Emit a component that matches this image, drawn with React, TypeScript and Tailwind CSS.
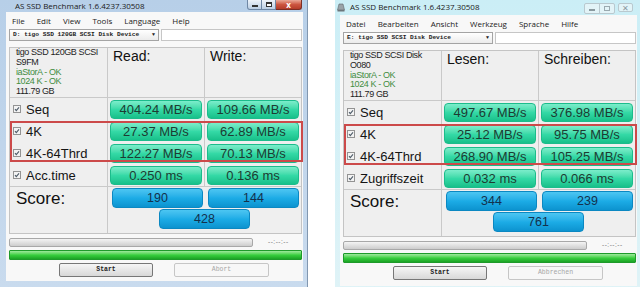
type Row = { label: string; read: string; write: string };

type WinProps = {
  active: boolean;
  menus: string[];
  drive: string;
  info: { text: string; green?: boolean }[];
  heads: [string, string];
  rows: Row[];
  scores: [string, string, string];
  start: string;
  abort: string;
};

const sans = "font-['Liberation_Sans',Arial,sans-serif]";
const ui = "font-['Open_Sans','Noto_Sans',sans-serif]";
const mono = "font-['Liberation_Mono','Courier_New',monospace]";

function Check() {
  return (
    <svg width="8" height="8" viewBox="0 0 8 8" className="shrink-0">
      <rect x="0.5" y="0.5" width="7" height="7" fill="#f3f3f3" stroke="#939393" />
      <path d="M2 4.1 L3.3 5.6 L6 2.3" fill="none" stroke="#4d5b68" strokeWidth="1.1" />
    </svg>
  );
}

function Bar({ v }: { v: string }) {
  return (
    <div className="ml-[2px] flex h-[19px] w-[92px] items-center justify-center rounded-[4px] border border-[#1cbc8b] bg-linear-to-b from-[#7bedcb] via-[#34d9a6] to-[#17c08a] text-[13px] leading-none text-[#1d3b32]">
      {v}
    </div>
  );
}

function Score({ v }: { v: string }) {
  return (
    <div className="flex h-[20px] w-[91px] items-center justify-center rounded-[4px] border border-[#0b88c2] bg-linear-to-b from-[#4cc6f2] via-[#1cace6] to-[#0c93cf] text-[12.5px] leading-none text-[#14314d]">
      {v}
    </div>
  );
}

function TitleButtons({ active }: { active: boolean }) {
  if (active) {
    return (
      <div className="mr-[5px] flex items-start">
        <div className="flex h-[10px] w-[15px] items-center justify-center rounded-bl-[3px] border border-t-0 border-[#6f87a4] bg-linear-to-b from-[#eef3f9] to-[#bccfe4]">
          <div className="mt-[3px] h-[2px] w-[6px] border-[0.5px] border-[#333] bg-white" />
        </div>
        <div className="flex h-[10px] w-[14px] items-center justify-center border-b border-r border-[#6f87a4] bg-linear-to-b from-[#eef3f9] to-[#bccfe4]">
          <div className="h-[5px] w-[6px] border border-t-2 border-[#333] bg-white" />
        </div>
        <div className="flex h-[10px] w-[26px] items-center justify-center rounded-br-[3px] border border-l-0 border-t-0 border-[#7c2e24] bg-linear-to-b from-[#e9a897] via-[#cc5640] to-[#b43c29] text-[8px] font-bold leading-none text-white">
          x
        </div>
      </div>
    );
  }
  return (
    <div className="mr-[7px] mt-[3px] flex items-start gap-[3px]">
      <div className="flex rounded-[2px] border border-[#b9c9cf] bg-[#e3f4f8]">
        <div className="flex h-[9px] w-[15px] items-center justify-center border-r border-[#b9c9cf]">
          <div className="mt-[2px] h-[2px] w-[6px] border-[0.5px] border-[#8a9aa0]" />
        </div>
        <div className="flex h-[9px] w-[14px] items-center justify-center">
          <div className="h-[5px] w-[6px] border border-[#9aaab0]" />
        </div>
      </div>
      <div className="flex h-[9px] w-[15px] items-center justify-center rounded-[2px] border border-[#b9c9cf] bg-[#e3f4f8] text-[8px] leading-none text-[#8a9aa0]">
        ✕
      </div>
    </div>
  );
}

function Win(p: WinProps) {
  const a = p.active;
  return (
    <div
      className={
        a
          ? "flex h-[287px] w-[308px] shrink-0 flex-col border-r border-[#8197b0] bg-linear-to-b from-[#b7cfe8] to-[#c9dbee]"
          : "flex h-[287px] w-[305px] shrink-0 flex-col bg-linear-to-b from-[#cbeef6] to-[#dff3f7]"
      }
    >
      <div className={a ? "flex h-[12px] items-start justify-between" : "flex h-[15px] items-start justify-between"}>
        <div className={a ? "flex items-center pl-[15px] pt-[1px]" : "flex items-center gap-[5px] pl-[2px] pt-[2px]"}>
          {!a && (
            <svg width="8" height="9" viewBox="0 0 8 9">
              <path d="M2 1 L6 1 L7.5 7 L0.5 7 Z" fill="#9aa3a8" stroke="#5e666b" strokeWidth="0.6" />
              <rect x="0.5" y="7" width="7" height="1.5" fill="#6d767b" />
            </svg>
          )}
          <span className={`${ui} text-[8px] leading-[10px] text-[#1a1a1a]`}>AS SSD Benchmark 1.6.4237.30508</span>
        </div>
        <TitleButtons active={a} />
      </div>
      <div className={a ? "flex flex-1 pb-[6px] pl-[6px] pr-[4px]" : "flex flex-1 pb-[1px] pl-[5px] pr-[3px]"}>
        <div className={`${sans} flex flex-1 flex-col bg-[#f8f8f8] pl-[3px] pr-[1px]`}>
          <div className={`${ui} flex h-[17px] items-center gap-[12px] pl-[3px] pt-[1px] text-[8px] text-[#222]`}>
            {p.menus.map((m) => (
              <span key={m}>{m}</span>
            ))}
          </div>
          <div className="flex h-[12px] gap-[2px]">
            <div className={`${mono} flex w-[150px] items-center border border-[#a4a4a4] bg-linear-to-b from-white to-[#ececec] pl-[3px] pr-[3px] text-[6.2px] font-bold leading-none text-[#222]`}>
              <span className="whitespace-pre">{p.drive}</span>
              <span className="ml-auto text-[5px]">▼</span>
            </div>
            <div className="flex-1 border border-[#c6c6c6] bg-white" />
          </div>

          <div className="relative mt-[6px] border border-[#c4c4c4] bg-[#efefef]">
            <div className="grid h-[50px] grid-cols-[98px_97px_1fr] border-b border-[#c9c9c9]">
              <div className="border-r border-[#c9c9c9] pl-[6px] text-[9px] leading-[9.75px] tracking-[-0.4px]">
                {p.info.map((l, i) => (
                  <div key={i} className={l.green ? "text-[#3f8d3f]" : "text-[#1e1e1e]"}>
                    {l.text}
                  </div>
                ))}
              </div>
              <div className="border-r border-[#c9c9c9] pl-[5px] pt-[1px] text-[14px] leading-none text-[#111]">{p.heads[0]}</div>
              <div className="pl-[5px] pt-[1px] text-[14px] leading-none text-[#111]">{p.heads[1]}</div>
            </div>

            <div className="relative">
              {p.rows.map((r) => (
                <div key={r.label} className="grid h-[22px] grid-cols-[98px_97px_1fr]">
                  <div className="flex items-center gap-[5px] border-r border-[#c9c9c9] pl-[3px] text-[13px] leading-none text-[#141414]">
                    <Check />
                    <span>{r.label}</span>
                  </div>
                  <div className="flex items-center border-r border-[#c9c9c9]">
                    <Bar v={r.read} />
                  </div>
                  <div className="flex items-center">
                    <Bar v={r.write} />
                  </div>
                </div>
              ))}
              <div className="absolute -right-[2px] left-0 top-[23px] h-[41px] border-2 border-[#cc4a4a]" />
            </div>

            <div className="grid h-[47px] grid-cols-[98px_1fr] border-t border-[#c9c9c9]">
              <div className="border-r border-[#c9c9c9] pl-[6px] pt-[3px] text-[17px] leading-none text-[#111]">Score:</div>
              <div className="flex flex-col items-center pt-[1px]">
                <div className="flex w-full gap-[5px] pl-[4px]">
                  <Score v={p.scores[0]} />
                  <Score v={p.scores[1]} />
                </div>
                <div className="mt-[1px]">
                  <Score v={p.scores[2]} />
                </div>
              </div>
            </div>
          </div>

          <div className="mt-[4px] flex h-[9px] items-center">
            <div className="h-full w-[244px] rounded-[2px] border border-[#a8a8a8] bg-linear-to-b from-[#f4f4f4] to-[#cdcdcd]" />
            <span className="ml-[15px] text-[6.5px] leading-none tracking-[0.5px] text-[#7a7a7a]">--:--:--</span>
          </div>
          <div className="mt-[3px] h-[10px] rounded-[1px] border border-[#1e9a2a] bg-linear-to-b from-[#9be99a] via-[#37cf3e] to-[#1ba325]" />
          <div className="mt-[3px] flex h-[14px] gap-[21px] pl-[50px]">
            <div className={`${mono} flex w-[94px] items-center justify-center rounded-[2px] border border-[#777] bg-linear-to-b from-[#f6f6f6] to-[#d8d8d8] text-[6.5px] font-bold leading-none text-[#222]`}>
              {p.start}
            </div>
            <div className={`${mono} flex w-[95px] items-center justify-center rounded-[2px] border border-[#c6c6c6] bg-[#f7f7f7] text-[6.5px] leading-none text-[#a6a6a6]`}>
              {p.abort}
            </div>
          </div>
        </div>
      </div>
    </div>
  );
}

export default function App() {
  return (
    <div className="flex h-[287px] w-[640px] overflow-hidden bg-white">
      <Win
        active
        menus={["File", "Edit", "View", "Tools", "Language", "Help"]}
        drive="D: tigo SSD 120GB SCSI Disk Device"
        info={[
          { text: "tigo SSD 120GB SCSI" },
          { text: "S9FM" },
          { text: "iaStorA - OK", green: true },
          { text: "1024 K - OK", green: true },
          { text: "111.79 GB" },
        ]}
        heads={["Read:", "Write:"]}
        rows={[
          { label: "Seq", read: "404.24 MB/s", write: "109.66 MB/s" },
          { label: "4K", read: "27.37 MB/s", write: "62.89 MB/s" },
          { label: "4K-64Thrd", read: "122.27 MB/s", write: "70.13 MB/s" },
          { label: "Acc.time", read: "0.250 ms", write: "0.136 ms" },
        ]}
        scores={["190", "144", "428"]}
        start="Start"
        abort="Abort"
      />
      <div className="w-[27px] shrink-0" />
      <Win
        active={false}
        menus={["Datei", "Bearbeiten", "Ansicht", "Werkzeug", "Sprache", "Hilfe"]}
        drive="E: tigo SSD SCSI Disk Device"
        info={[
          { text: "tigo SSD SCSI Disk" },
          { text: "O080" },
          { text: "iaStorA - OK", green: true },
          { text: "1024 K - OK", green: true },
          { text: "111.79 GB" },
        ]}
        heads={["Lesen:", "Schreiben:"]}
        rows={[
          { label: "Seq", read: "497.67 MB/s", write: "376.98 MB/s" },
          { label: "4K", read: "25.12 MB/s", write: "95.75 MB/s" },
          { label: "4K-64Thrd", read: "268.90 MB/s", write: "105.25 MB/s" },
          { label: "Zugriffszeit", read: "0.032 ms", write: "0.066 ms" },
        ]}
        scores={["344", "239", "761"]}
        start="Start"
        abort="Abbrechen"
      />
    </div>
  );
}
